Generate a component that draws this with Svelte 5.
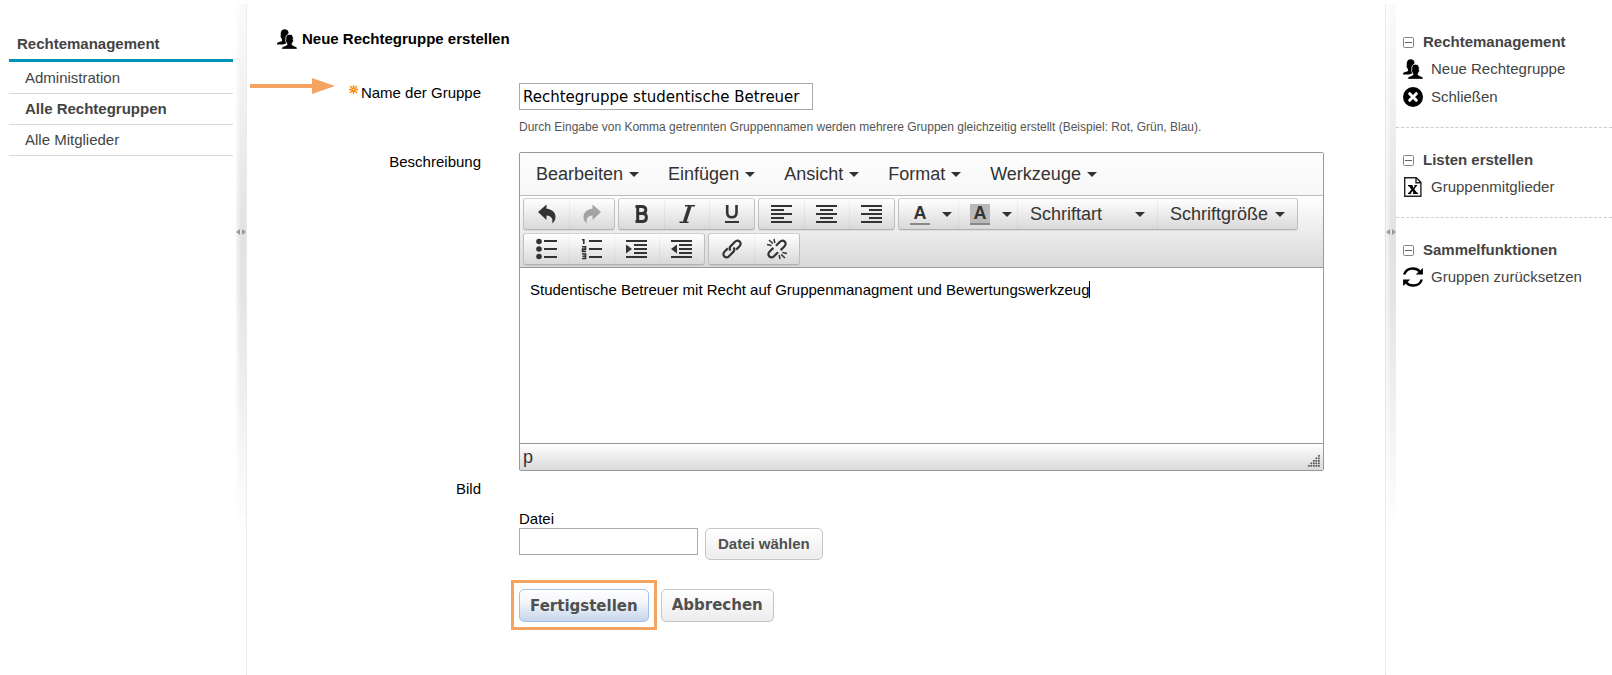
<script>
  const nav = [
    { label: 'Administration', active: false },
    { label: 'Alle Rechtegruppen', active: true },
    { label: 'Alle Mitglieder', active: false },
  ];

  const menus = ['Bearbeiten', 'Einfügen', 'Ansicht', 'Format', 'Werkzeuge'];

  const groups = [
    [['undo', 'Rückgängig'], ['redo', 'Wiederholen']],
    [['bold', 'Fett'], ['italic', 'Kursiv'], ['underline', 'Unterstrichen']],
    [['left', 'Linksbündig'], ['center', 'Zentriert'], ['right', 'Rechtsbündig']],
  ];

  const lowerGroups = [
    [['bullets', 'Aufzählung'], ['numbers', 'Nummerierte Liste'], ['indent', 'Einzug vergrößern'], ['outdent', 'Einzug verkleinern']],
    [['link', 'Link einfügen'], ['unlink', 'Link entfernen']],
  ];

  const tools = [
    { title: 'Rechtemanagement', items: [['people', 'Neue Rechtegruppe'], ['close', 'Schließen']] },
    { title: 'Listen erstellen', items: [['sheet', 'Gruppenmitglieder']] },
    { title: 'Sammelfunktionen', items: [['refresh', 'Gruppen zurücksetzen']] },
  ];

  const grip = [[10, 0], [7.5, 2.5], [10, 2.5], [5, 5], [7.5, 5], [10, 5], [2.5, 7.5], [5, 7.5], [7.5, 7.5], [10, 7.5], [0, 10], [2.5, 10], [5, 10], [7.5, 10], [10, 10]];

  let groupName = $state('Rechtegruppe studentische Betreuer');
  let fileName = $state('');
</script>

{#snippet caret()}
  <svg class="caret" width="10" height="5" viewBox="0 0 10 5" aria-hidden="true"><path d="M0 0h10L5 5z" fill="#333" /></svg>
{/snippet}

{#snippet pageIcon(name)}
  <svg class="page-icon" width="20" height="20" viewBox="0 0 20 20" aria-hidden="true">
    {#if name === 'people'}
      <path d="M0 15.500c0-1.500.5-1.900 2-2.400 1.700-.6 2.900-.9 3.100-1.700.1-.8-.6-1.400-.9-2.700-.6-.3-.9-1.600-.4-2.100C3.500 3.200 4.400.3 7.600.3c2 0 3.600 1 4 3.400L9 9l1 5-4 1.500z" />
      <path d="M4.600 20.300c0-2 .6-2.500 2.200-3.100 1.800-.6 3-.9 3.200-1.700.1-.8-.6-1.300-.9-2.500-.6-.4-.8-1.600-.3-2.100-.3-3.600.7-5.700 3.700-5.700s4.100 2.100 3.700 5.700c.5.500.3 1.700-.3 2.100-.3 1.200-1 1.700-.9 2.500.2.800 1.300 1.100 3 1.700 1.600.6 2.300 1.100 2.300 3.100z" stroke="#fff" stroke-width=".8" />
    {:else if name === 'close'}
      <circle cx="10" cy="10" r="10" />
      <path d="M6.700 6.700l6.600 6.600M13.300 6.700l-6.600 6.600" stroke="#fff" stroke-width="3" stroke-linecap="round" />
    {:else if name === 'sheet'}
      <path d="M1.700.700h11.600l4.600 4.700v13.900H1.700zM13 .700v5h5" fill="none" stroke="#222" stroke-width="1.400" />
      <path d="M5 8h4.600v1.300L10.400 11l1.100-1.700V8H14v1.300h-.7l-2 2.900 2.800 3.500h.9V17h-5v-1.300h.4L9.500 14l-1.300 1.700V17H5v-1.300h.9l2.500-3.200-2.400-3.200H5z" />
    {:else}
      <path d="M1.200 7.500C2.500 3.500 6 1.500 9.800 1.500c3 0 5.200 1 6.900 2.900M18.800 12.500C17.500 16.500 14 18.500 10.200 18.500c-3 0-5.200-1-6.900-2.900" fill="none" stroke="#000" stroke-width="2.400" />
      <path d="M19.900 1v6.500h-7.200zM.100 19v-6.500h7.200z" />
    {/if}
  </svg>
{/snippet}

{#snippet editIcon(name)}
  <svg width="22" height="22" viewBox="0 0 22 22" fill="none" stroke="#333" stroke-width="2" aria-hidden="true">
    {#if name === 'undo'}
      <path d="M2 9l8.500-7.500v4.300c6 .4 9 4.300 9 8.200 0 3-1.500 5.200-3.300 6.500 1-4.500-.7-7.900-5.700-8.100v4.600z" fill="#333" stroke="none" />
    {:else if name === 'redo'}
      <path d="M20 9l-8.500-7.500v4.300c-6 .4-9 4.300-9 8.200 0 3 1.500 5.200 3.300 6.500-1-4.500.7-7.900 5.700-8.100v4.600z" fill="#a3a3a3" stroke="none" />
    {:else if name === 'bold'}
      <path d="M4.500 3.400h5.900c3.200 0 4.400 1.200 4.400 3.400s-1.400 3.700-4 3.700H6.500h4.700c3 0 4.200 1.400 4.200 3.900 0 2.600-1.300 4-4.400 4H4.500M6.700 2v17.800" stroke-width="3" />
    {:else if name === 'italic'}
      <path d="M9 2.800h10M3.500 19.200h9" stroke-width="1.600" /><path d="M13.900 3L8.600 19" stroke-width="3.600" />
    {:else if name === 'underline'}
      <path d="M6.200 2v7.500c0 3.300 1.600 4.800 4.600 4.800s4.700-1.500 4.700-4.800V2" stroke-width="2.600" /><path d="M4 19h14" />
    {:else if name === 'left'}
      <path d="M0 3h21M0 7h13M0 11h21M0 15h13M0 19h21" />
    {:else if name === 'center'}
      <path d="M0 3h21M4 7h13M0 11h21M4 15h13M0 19h21" />
    {:else if name === 'right'}
      <path d="M0 3h21M8 7h13M0 11h21M8 15h13M0 19h21" />
    {:else if name === 'bullets'}
      <path d="M8 3h13M8 11h13M8 19h13" /><circle cx="3" cy="3.500" r="2.800" fill="#333" stroke="none" /><circle cx="3" cy="11" r="2.800" fill="#333" stroke="none" /><circle cx="3" cy="18.500" r="2.800" fill="#333" stroke="none" />
    {:else if name === 'numbers'}
      <path d="M8 3h13M8 11h13M8 19h13" /><path d="M1 1.700h1.800V6M1 8.800h3.500v2.300H1.500v2.300h3.500M1 16h3.500v4.500H1M1.500 18.200h3" stroke-width="1.600" />
    {:else if name === 'indent'}
      <path d="M0 3h21M8 7h13M8 11h13M8 15h13M0 19h21" /><path d="M0 6.500v9l6-4.500z" fill="#333" stroke="none" />
    {:else if name === 'outdent'}
      <path d="M0 3h21M8 7h13M8 11h13M8 15h13M0 19h21" /><path d="M6 6.500v9L0 11z" fill="#333" stroke="none" />
    {:else if name === 'link'}
      <path d="M9.500 12.500c-1.300-1.700-1-3.200.2-4.400l4.300-4.300c1.500-1.500 3.500-1.300 4.700-.2s1.300 3.200-.2 4.700l-3.300 3.300M12.500 9.500c1.300 1.700 1 3.200-.2 4.400L8 18.200c-1.500 1.500-3.500 1.300-4.700.2s-1.300-3.200.2-4.700l3.300-3.300" stroke-width="2.200" />
    {:else}
      <path d="M10 7.800l4-4c1.500-1.500 3.500-1.300 4.700-.2s1.300 3.200-.2 4.700l-3.800 3.800M12 14.200l-4 4c-1.500 1.500-3.500 1.300-4.700.2s-1.300-3.200.2-4.700l3.800-3.800" stroke-width="2.200" /><path d="M1 6.500l4.500 1M3 2l3.800 3.500M8 1l.8 4M21 15.500l-4.500-1M19 20l-3.800-3.500M14 21l-.8-4" stroke-width="1.500" />
    {/if}
  </svg>
{/snippet}

{#snippet buttonGroup(items)}
  <div class="group">
    {#each items as [name, label]}
      <button type="button" class="tool" aria-label={label}>{@render editIcon(name)}</button>
    {/each}
  </div>
{/snippet}

{#snippet splitter(side)}
  <div class="splitter {side}">
    <svg width="10" height="6" viewBox="0 0 10 6" aria-hidden="true"><path d="M4 0v6L0 3zM6 0v6l4-3z" fill="#999" /></svg>
  </div>
{/snippet}

<div class="page">
  <nav class="sidebar">
    <h2>Rechtemanagement</h2>
    <ul>
      {#each nav as item}
        <li><a href="#top" class:active={item.active}>{item.label}</a></li>
      {/each}
    </ul>
  </nav>

  {@render splitter('before')}

  <main>
    <h1>{@render pageIcon('people')}Neue Rechtegruppe erstellen</h1>
    <svg class="pointer" width="86" height="16" viewBox="0 0 86 16" aria-hidden="true"><path d="M0 6h62V0l23 8-23 8v-6H0z" fill="#f4a460" /></svg>

    <form onsubmit={(e) => e.preventDefault()}>
      <div class="row name-row">
        <label for="group-name">
          <svg class="required" width="9" height="9" viewBox="0 0 9 9" aria-hidden="true"><path d="M4.500 0v9M0 4.500h9M1 1l7 7M8 1L1 8" stroke="#f80" stroke-width="1.300" /><circle cx="4.500" cy="4.500" r=".8" fill="#fff" /></svg>Name der Gruppe
        </label>
        <div>
          <input id="group-name" class="name" type="text" bind:value={groupName} />
          <p class="hint">Durch Eingabe von Komma getrennten Gruppennamen werden mehrere Gruppen gleichzeitig erstellt (Beispiel: Rot, Grün, Blau).</p>
        </div>
      </div>

      <div class="row">
        <span class="caption" id="description-label">Beschreibung</span>
        <div class="editor">
          <div class="menubar">
            {#each menus as menu}
              <button type="button">{menu}{@render caret()}</button>
            {/each}
          </div>
          <div class="toolbar">
            <div class="toolbar-row">
              {#each groups as items}{@render buttonGroup(items)}{/each}
              <div class="group">
                <button type="button" class="colour" aria-label="Textfarbe"><span class="swatch">A</span>{@render caret()}</button>
                <button type="button" class="colour" aria-label="Hintergrundfarbe"><span class="swatch filled">A</span>{@render caret()}</button>
                <button type="button" class="picker">Schriftart{@render caret()}</button>
                <button type="button" class="picker">Schriftgröße{@render caret()}</button>
              </div>
            </div>
            <div class="toolbar-row">
              {#each lowerGroups as items}{@render buttonGroup(items)}{/each}
            </div>
          </div>
          <div class="content" contenteditable="true" role="textbox" tabindex="0" aria-multiline="true" aria-labelledby="description-label">Studentische Betreuer mit Recht auf Gruppenmanagment und Bewertungswerkzeug<span class="cursor"></span></div>
          <div class="status">
            <span>p</span>
            <svg width="12" height="12" viewBox="0 0 12 12" aria-hidden="true">
              {#each grip as [x, y]}<rect {x} {y} width="1.700" height="1.700" fill="#555" />{/each}
            </svg>
          </div>
        </div>
      </div>

      <div class="row picture-row">
        <span class="caption">Bild</span>
        <div class="upload">
          <label for="file-name">Datei</label>
          <div class="file">
            <input id="file-name" type="text" bind:value={fileName} />
            <button type="button" class="choose">Datei wählen</button>
          </div>
          <div class="actions">
            <div class="marked"><button type="submit" class="primary">Fertigstellen</button></div>
            <button type="button">Abbrechen</button>
          </div>
        </div>
      </div>
    </form>
  </main>

  {@render splitter('after')}

  <aside>
    {#each tools as section}
      <section>
        <h3>
          <svg width="11" height="11" viewBox="0 0 11 11" aria-hidden="true"><rect x=".5" y=".5" width="10" height="10" rx="1" fill="#fff" stroke="#7b8787" /><path d="M2 5.500h7" stroke="#566" /></svg>{section.title}
        </h3>
        {#each section.items as [icon, label]}
          <a href="#top">{@render pageIcon(icon)}{label}</a>
        {/each}
      </section>
    {/each}
  </aside>
</div>

<style>
  :global(body) {
    margin: 0;
    background: #fff;
  }

  .page {
    display: grid;
    grid-template-columns: 236px 11px minmax(0, 1fr) 11px 216px;
    min-height: 100vh;
    font: 15px/20px "Liberation Sans", Arial, sans-serif;
    color: #444;
  }

  .page *,
  .page {
    box-sizing: border-box;
  }

  h1, h2, h3, p, ul {
    margin: 0;
    padding: 0;
    font-size: 15px;
  }

  button, input {
    margin: 0;
    font: inherit;
    color: inherit;
  }

  svg {
    display: block;
    flex: none;
  }

  a {
    color: inherit;
    text-decoration: none;
  }

  .sidebar {
    padding: 34px 3px 0 9px;
  }

  .sidebar h2 {
    padding: 0 8px 5px;
    border-bottom: 3px solid #0093b8;
  }

  .sidebar ul {
    padding-top: 1px;
    list-style: none;
  }

  .sidebar a {
    display: block;
    padding: 5px 16px;
    border-bottom: 1px solid #d8d8d8;
  }

  .sidebar .active {
    font-weight: bold;
  }

  .splitter {
    margin-top: 4px;
    padding-top: 225px;
    background:
      linear-gradient(90deg, #ffffffb0, #fff0 5px),
      linear-gradient(#fbfbfb, #e2e2e2 230px, #e4e4e4 290px, #fff 530px);
  }

  .before {
    border-right: 1px dotted #ddd;
  }

  .after {
    border-left: 1px dotted #ddd;
  }

  main {
    position: relative;
    padding: 29px 61px 0 0;
    color: #000;
  }

  h1 {
    display: flex;
    gap: 5px;
    padding-left: 30px;
  }

  .pointer {
    position: absolute;
    top: 78px;
    left: 3px;
  }

  form {
    padding-top: 34px;
  }

  .row {
    display: grid;
    grid-template-columns: 234px minmax(0, 1fr);
    gap: 38px;
  }

  .row > label,
  .caption {
    display: flex;
    justify-content: flex-end;
    align-items: flex-start;
    gap: 3px;
  }

  .name-row {
    padding-bottom: 16px;
  }

  .required {
    margin-top: 2px;
  }

  input {
    display: block;
    height: 27px;
    padding: 0 3px;
    border: 1px solid #aaa;
    background: #fff;
  }

  .name {
    width: 294px;
    font: 15px/20px "DejaVu Sans", Verdana, sans-serif;
  }

  .hint {
    padding-top: 9px;
    font-size: 12px;
    line-height: 17px;
    color: #555;
  }

  .editor {
    border: 1px solid #999;
    border-radius: 2px;
    font-size: 18px;
    color: #333;
  }

  .editor button {
    display: flex;
    align-items: center;
    border: 0;
    background: none;
  }

  .menubar {
    display: flex;
    height: 43px;
    padding-left: 2px;
    border-bottom: 1px solid #bbb;
    background: linear-gradient(#fdfdfd, #f7f7f7);
  }

  .menubar button {
    gap: 6px;
    padding: 0 15px 0 14px;
  }

  .toolbar {
    display: flex;
    flex-direction: column;
    gap: 3px;
    padding: 2px 3px;
    border-bottom: 1px solid #999;
    background: linear-gradient(#fff, #d9d9d9);
  }

  .toolbar-row {
    display: flex;
    gap: 3px;
  }

  .group {
    display: flex;
    height: 32px;
    border: 1px solid #bbb;
    border-color: #d0d0d0 #c0c0c0 #b0b0b0;
    border-radius: 3px;
    background: linear-gradient(#fff, #d9d9d9);
    box-shadow: 0 1px 1px #0001;
  }

  .group button + button {
    border-left: 1px solid #0000000a;
  }

  .tool {
    justify-content: center;
    width: 45px;
    padding: 0;
  }

  .editor .colour {
    gap: 12px;
    width: 59px;
    padding: 0 0 0 11px;
  }

  .swatch {
    width: 20px;
    border-bottom: 2px solid #888;
    font-weight: bold;
    line-height: 19px;
    text-align: center;
  }

  .filled {
    background: #b9b9b9;
  }

  .picker {
    justify-content: space-between;
    width: 140px;
    padding: 0 12px;
  }

  .content {
    min-height: 175px;
    padding: 12px 10px;
    outline: 0;
    background: #fff;
    font-size: 15px;
    color: #000;
  }

  .cursor {
    display: inline-block;
    height: 17px;
    border-left: 1px solid #000;
    vertical-align: -3px;
  }

  .status {
    display: flex;
    justify-content: space-between;
    align-items: flex-end;
    height: 27px;
    padding: 0 3px 3px;
    border-top: 1px solid #999;
    background: linear-gradient(#fff, #d9d9d9);
  }

  .picture-row {
    padding-top: 8px;
  }

  .upload {
    padding-top: 30px;
  }

  .upload > label {
    display: block;
    line-height: 19px;
  }

  .file {
    display: flex;
    gap: 7px;
  }

  .file input {
    width: 179px;
  }

  .file button,
  .actions button {
    height: 33px;
    padding: 0 10px;
    border: 1px solid #c6c6c6;
    border-radius: 5px;
    background: linear-gradient(#fff, #ececec);
    font-weight: bold;
    color: #505050;
  }

  .file button {
    height: 32px;
    padding: 0 12px;
  }

  .actions {
    display: flex;
    align-items: center;
    gap: 4px;
    margin-left: -8px;
    padding-top: 20px;
  }

  .actions button {
    font: bold 15px/20px "DejaVu Sans", Verdana, sans-serif;
  }

  .marked {
    padding: 6px 5px 5px;
    border: 3px solid #f4a460;
  }

  .actions .primary {
    border-color: #a3c0e6;
    background: linear-gradient(#fff, #f4f6fa 40%, #c5d5ec);
  }

  section {
    padding: 22px 0 16px 7px;
    border-bottom: 1px dashed #ccc;
  }

  section:first-child {
    padding-top: 32px;
  }

  section:last-child {
    border-bottom: 0;
  }

  h3 {
    display: flex;
    align-items: center;
    gap: 9px;
    padding-bottom: 3px;
  }

  aside a {
    display: flex;
    align-items: center;
    gap: 8px;
    padding: 4px 0;
  }
</style>
